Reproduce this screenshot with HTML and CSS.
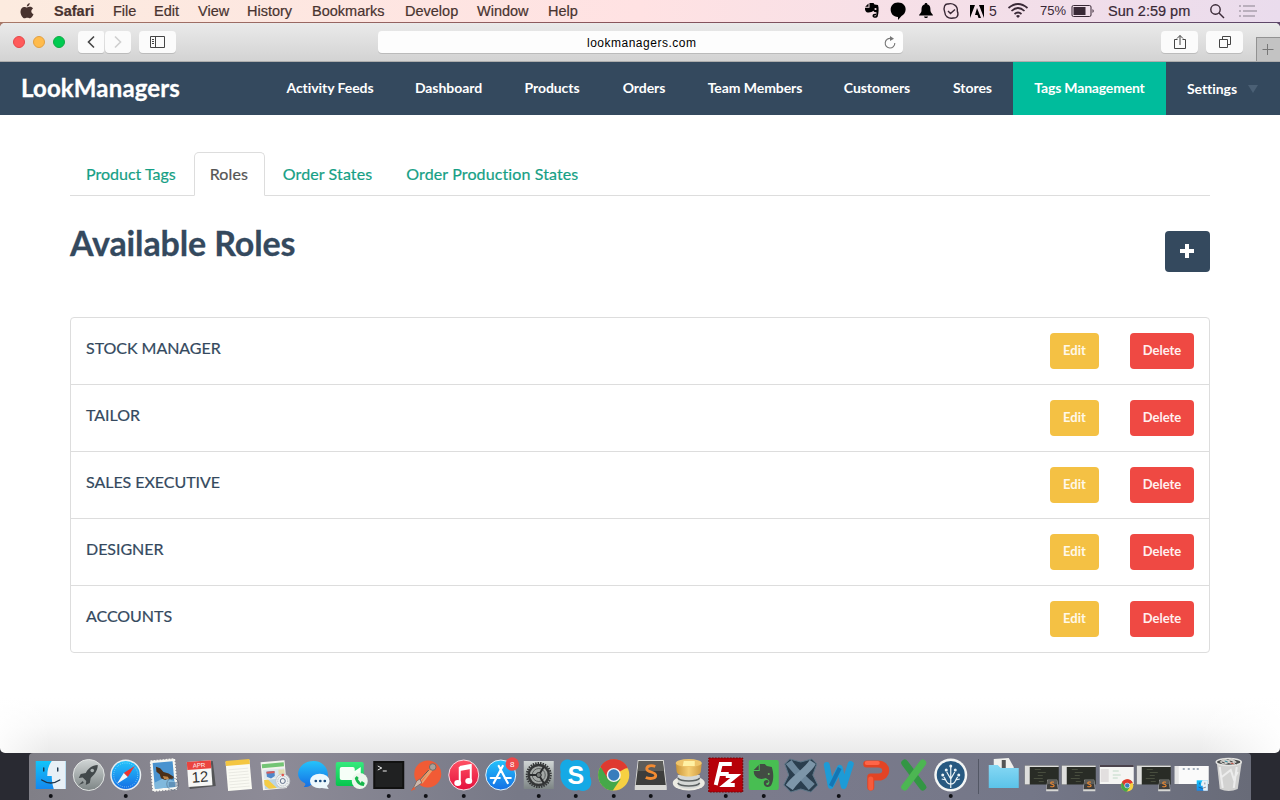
FILE: index.html
```html
<!DOCTYPE html>
<html lang="en">
<head>
<meta charset="utf-8">
<title>LookManagers</title>
<link rel="stylesheet" href="styles.css">
</head>
<body>
<div class="desktop">
  <header class="menubar">
    <svg class="apple" width="14" height="18" viewBox="0 0 14 18"><path d="M9.700 1C9.800 3 8.300 4.600 6.800 4.600 6.700 2.800 8.200 1.200 9.700 1zM7 5.500C7.700 5.500 8.600 4.800 10 4.800c1.300 0 2.400.7 3 1.600-2.500 1.500-2.100 4.700.5 5.700-.6 1.800-2 4.200-3.400 4.200-1.100 0-1.400-.6-2.800-.6s-1.800.6-2.800.6C2.800 16.300.500 12.700.500 9.700.500 6.600 2.400 4.900 4.200 4.900c1.200 0 2.200.6 2.800.6z"/></svg>
    <nav class="menus"><b>Safari</b><span>File</span><span>Edit</span><span>View</span><span>History</span><span>Bookmarks</span><span>Develop</span><span>Window</span><span>Help</span></nav>
    <div class="status">
      <svg width="16" height="18" viewBox="0 0 16 18"><path d="M4.500 1.500v3.300H1.200zM5.500 1h4l1 1.500 3.500.500c1 3 .8 7.500-.3 11.500-.6 1.700-5.200 1.800-5.200-.5 0-1.800 1.500-2.700 3.500-2.200v1.600c-1-.3-1.800 0-1.800.4 0 .8 1.700.8 2-.2l.3-3.300-2-.3-1.300-1.200c-1 1.700-4.500 2-6.500 1.500C1.500 9.500.800 8 1 5.800h4.500z"/><ellipse cx="11.500" cy="7" rx="1.100" ry=".9" fill="#f7dce4"/></svg>
      <svg width="18" height="20" viewBox="0 0 18 20"><path d="M9 1.500c9.500 0 9.500 11 3.500 13.500L9 19v-3C-1 15.500-.5 1.500 9 1.500z"/></svg>
      <svg width="16" height="18" viewBox="0 0 16 18"><path d="M8 1c1 0 1.500.6 1.400 1.500C12 3 12.500 5 12.500 9c0 2 2.500 3 2.500 4.500H1C1 12 3.500 11 3.500 9c0-4 .5-6 3.100-6.500C6.500 1.600 7 1 8 1zM6 14.500h4c-.5 2-3.500 2-4 0z"/></svg>
      <svg class="line" width="18" height="18" viewBox="0 0 18 18"><path d="M2.700 10C1 5 3 1.500 6 2c5-1.500 10 2 9.300 7 2 5-1 7.500-4.300 7-5 1-8-2-8.300-6zM6 9l2.500 2.500L13 7.500"/></svg>
      <svg width="16" height="16" viewBox="0 0 16 16"><path d="M1 2h5L1 15zM10 2h5v13zM8 5l4 10H9.500l-1-3H6z"/></svg>
      <span class="five">5</span>
      <svg class="wifi" width="22" height="18" viewBox="0 0 22 18"><path d="M1.500 6Q11-2 20.500 6M4.500 9Q11 3 17.500 9M7.500 12Q11 9 14.500 12"/><path class="solid" d="M9 14q2-2 4 0l-2 2z"/></svg>
      <span class="percent">75%</span>
      <svg class="battery" width="24" height="14" viewBox="0 0 24 14"><rect x="1" y="1.500" width="19" height="11" rx="1.500"/><path class="solid" d="M2.500 3h12v8h-12zM21.500 5q2.500 2 0 4z"/></svg>
      <span class="clock">Sun 2:59 pm</span>
      <svg class="line search" width="16" height="16" viewBox="0 0 16 16"><circle cx="6.500" cy="6.500" r="4.700"/><path d="M10 10l5 5"/></svg>
      <svg class="menu-list" width="20" height="14" viewBox="0 0 20 14"><path d="M1 2h2M5 2h12M1 7h2M5 7h14M1 12h2M5 12h12"/></svg>
    </div>
  </header>
  <main class="window">
    <div class="toolbar">
      <i class="light red"></i><i class="light amber"></i><i class="light green"></i>
      <button class="tool back"><svg width="10" height="14" viewBox="0 0 10 14"><path d="M8 1.500L2.500 7 8 12.500"/></svg></button>
      <button class="tool forward"><svg width="10" height="14" viewBox="0 0 10 14"><path d="M2 1.500L7.500 7 2 12.500"/></svg></button>
      <button class="tool sidebar"><svg width="17" height="14" viewBox="0 0 17 14"><path class="thin" d="M1.500 1.500h14v11h-14zM6.500 1.500v11M3 4.500h2M3 6.500h2M3 8.500h2"/></svg></button>
      <div class="address"><span>lookmanagers.com</span><svg width="14" height="14" viewBox="0 0 14 14"><path d="M8 2.500A4.800 4.800 0 1 0 11.800 7"/><path class="arrow" d="M7 0l4 2.700L7 5z"/></svg></div>
      <button class="tool share"><svg width="14" height="16" viewBox="0 0 14 16"><path class="thin" d="M4.500 5.500h-3v9h11v-9h-3M7 11V1.500M4 4.500l3-3 3 3"/></svg></button>
      <button class="tool tabs-icon"><svg width="14" height="14" viewBox="0 0 14 14"><path class="thin" d="M1.500 4.500h8v8h-8zM4.500 4.500v-3h8v8H9.500"/></svg></button>
      <button class="new-tab" aria-label="New tab"><svg width="14" height="14" viewBox="0 0 14 14"><path class="thin" d="M1.500 6.500h11M6.500 1v11"/></svg></button>
    </div>
    <div class="navbar">
      <a class="brand">LookManagers</a>
      <nav class="links"><a>Activity Feeds</a><a>Dashboard</a><a>Products</a><a>Orders</a><a>Team Members</a><a>Customers</a><a>Stores</a><a class="active">Tags Management</a><a class="settings">Settings<i class="caret"></i></a></nav>
    </div>
    <section class="content">
      <nav class="tabs"><a>Product Tags</a><a class="current">Roles</a><a>Order States</a><a class="long">Order Production States</a></nav>
      <div class="heading"><h1>Available Roles</h1><button class="add" aria-label="Add role"><svg width="14" height="14" viewBox="0 0 14 14"><path d="M5 0h4v5h5v4H9v5H5V9H0V5h5z"/></svg></button></div>
      <ul class="roles">
        <li><span>STOCK MANAGER</span><button class="btn edit">Edit</button><button class="btn delete">Delete</button></li>
        <li><span>TAILOR</span><button class="btn edit">Edit</button><button class="btn delete">Delete</button></li>
        <li><span>SALES EXECUTIVE</span><button class="btn edit">Edit</button><button class="btn delete">Delete</button></li>
        <li><span>DESIGNER</span><button class="btn edit">Edit</button><button class="btn delete">Delete</button></li>
        <li><span>ACCOUNTS</span><button class="btn edit">Edit</button><button class="btn delete">Delete</button></li>
      </ul>
    </section>
  </main>
  <footer class="dock-area">
    <svg class="defs" width="0" height="0"><defs>
      <linearGradient id="blue" x2="0" y2="1"><stop stop-color="#24c3fb"/><stop offset="1" stop-color="#156fe5"/></linearGradient>
      <linearGradient id="face" x2="0" y2="1"><stop stop-color="#12c4fa"/><stop offset="1" stop-color="#1488ee"/></linearGradient>
      <linearGradient id="silver" x2="0" y2="1"><stop stop-color="#d0d5d5"/><stop offset="1" stop-color="#7d8585"/></linearGradient>
      <linearGradient id="pink" x2="0" y2="1"><stop stop-color="#ff5264"/><stop offset="1" stop-color="#e4103c"/></linearGradient>
      <linearGradient id="greenfill" x2="0" y2="1"><stop stop-color="#35e97d"/><stop offset="1" stop-color="#07c54d"/></linearGradient>
      <linearGradient id="folder" x2="0" y2="1"><stop stop-color="#86d8f4"/><stop offset="1" stop-color="#5bc3e9"/></linearGradient>
      <linearGradient id="gold" x2="1" y2="0"><stop stop-color="#c99437"/><stop offset=".5" stop-color="#f6cf74"/><stop offset="1" stop-color="#cf9a40"/></linearGradient>
      <g id="chrome"><circle r="16" fill="#f6d042"/><path d="M0 0L-14-8A16 16 0 0 1 14-8z" fill="#df3a30"/><path d="M0 0L-14-8A16 16 0 0 0-1 16L7 4z" fill="#45a849"/><path d="M0-7H14.500A16 16 0 0 0-13.500-8.500L-6 4z" fill="#df3a30"/><circle r="7.300" fill="#f6f6f2"/><circle r="5.800" fill="#397dbd"/></g>
      <g id="sublime"><path d="M-13-15H13L16 12v3h-32v-3z" fill="#d8d8d5"/><path d="M-12-14H12L15 10h-30z" fill="#3d3d3c"/><path d="M-12-14H12L13-4h-26z" fill="#5c5c59"/><path d="M4.500-8.500C1-10-4-9.500-4-6-4-2.500 5-3.500 5 .5 5 4-2 4-5 2.500" fill="none" stroke="#f28b32" stroke-width="2.800"/></g>
      <g id="finder"><path d="M-15-14h30v28h-30z" fill="url(#face)"/><path d="M1-14h14v28H3C1.500 9 1 5 1 1h-4.500c0-6 1.500-11 4.500-15z" fill="#e8f0f6"/><path d="M-7-7v3M7-7v3M-9 5Q0 11 9 5" fill="none" stroke="#1d3349" stroke-width="1.400" stroke-linecap="round"/></g>
      <g id="thumb"><path d="M-17-8h34v19h-34z" fill="#292c26"/><path d="M-17-8h34v1.500h-34zM-17-7h5v18h-5z" fill="#dededd"/><path d="M-7-4h6M-4-1h8M-4 2h5M-8 5h9M-3 8h5" stroke="#565c49" stroke-width=".7"/><use href="#sublime" transform="translate(10.500 12) scale(.38)"/></g>
    </defs></svg>
    <div class="dock">
      <svg class="app" viewBox="-18.75 -22 37.5 47"><use href="#finder"/><circle class="dot" cy="21" r="2"/></svg>
      <svg class="app" viewBox="-18.75 -22 37.5 47"><circle r="15.500" fill="url(#silver)" stroke="#e1e4e3"/><path d="M9-10C3-10-1-6-3-2l-5 1-2 4 4-.5 3.500 3.500-.5 4 4-2 1-5C5 0 9-4 9-10zM-6 6l-4 4 5-2z" fill="#42494b"/><circle cx="3.500" cy="-4.500" r="1.800" fill="#aab1b1"/></svg>
      <svg class="app" viewBox="-18.75 -22 37.5 47"><circle r="15.500" fill="#e9eef0"/><circle r="14" fill="url(#blue)"/><circle r="12" fill="none" stroke="#a4ddfa" stroke-dasharray=".7 1.500"/><path d="M9-9L2 2-2-2z" fill="#ee3430"/><path d="M-9 9L-2-2 2 2z" fill="#f6f6f6"/><circle class="dot" cy="21" r="2"/></svg>
      <svg class="app" viewBox="-18.75 -22 37.5 47"><g transform="rotate(-5)"><path d="M-12-15h24v30h-24z" fill="#f7f7f2" stroke="#f7f7f2" stroke-width="1.500" stroke-dasharray="2 1"/><path d="M-10-13h20v26h-20z" fill="#4a93cf"/><path d="M-10 7L0 3 10 7v6h-20z" fill="#80b9dd"/><path d="M-7-9l4 2 3 4 5 2 5 4-2 2-4-1-3 1-4-2-1-4-3-3z" fill="#4b3019"/><path d="M-1 1l5 1 1 3-5-1z" fill="#bd8547"/></g><circle cx="9" cy="9" r="6" fill="none" stroke="#485d72" stroke-opacity=".5"/><path d="M5 7h8v5H5z" fill="#3e6c96" fill-opacity=".5"/></svg>
      <svg class="app" viewBox="-18.75 -22 37.5 47"><path d="M-12-12l24-2 3 25-26 3z" fill="#545557"/><g transform="rotate(-4)"><path d="M-13-14h24v25h-24z" fill="#f7f7f5"/><path d="M-13-14h24v8h-24z" fill="#eb443f"/><text x="-1" y="-7.800" class="cal-month">APR</text><text x="-1" y="7" class="cal-day">12</text></g></svg>
      <svg class="app" viewBox="-18.75 -22 37.5 47"><g transform="rotate(-5)"><path d="M-12-14h24v29h-24z" fill="#fafaf3"/><path d="M-12-15h24v5h-24z" fill="#f4c640"/><path d="M-10-6h20M-10-3h20M-10 0h20M-10 3h20M-10 6h20M-10 9h20M-10 12h20" stroke="#deded8" stroke-width=".6"/></g></svg>
      <svg class="app" viewBox="-18.75 -22 37.5 47"><g transform="rotate(-5)"><path d="M-14-14h24v28h-24z" fill="#f3f3ee"/><path d="M-13-12h22v4h-22z" fill="#74c575"/><path d="M-12-6H9v9h-21z" fill="#dde7ec"/><path d="M-9-4h8v5l-4 2-4-2z" fill="#4f87c9"/><path d="M-9-4h8v2h-8z" fill="#d95b58"/><path d="M-12 4h20v9h-20z" fill="#bad5e4"/><path d="M-12 4h4L0 13h-8l-4-4z" fill="#f4cc45"/><path d="M3-5h6v8H3z" fill="#e2dcae"/></g><circle cx="7" cy="6" r="7" fill="#eef1f2" stroke="#c4c8cb"/><circle cx="7" cy="6" r="5" fill="none" stroke="#a8b0b5" stroke-dasharray="1 1"/><circle cx="7" cy="6" r="2.500" fill="none" stroke="#62708a"/><circle cx="7" cy="0" r="1.300" fill="#e25449"/></svg>
      <svg class="app" viewBox="-18.75 -22 37.5 47"><path d="M-10 12c2-2 2-3 1-4C-21 3-16-14 0-14S20 9 4 9l-7 1c-2 2-4 2-7 2z" fill="url(#blue)"/><ellipse cx="6" cy="6" rx="9.800" ry="7.300" fill="#edf8fd"/><path d="M12 9l3 5-7-1z" fill="#edf8fd"/><path d="M2 6h.1M6.500 6h.1M11 6h.1" stroke="#1b4b7e" stroke-width="2.600" stroke-linecap="round"/></svg>
      <svg class="app" viewBox="-18.75 -22 37.5 47"><rect x="-15" y="-13" width="28" height="24" rx="2" fill="url(#greenfill)"/><path d="M-11-6q0-2 2-2H2q2 0 2 2v2l6-4V5L4 3v2H-9q-2 0-2-2z" fill="#f6fff7"/><circle cx="9" cy="6" r="8" fill="#edf7ed"/><path d="M6 1L4 3c1 5 5 8 9 8l1-3-3-2-1 2-3-4 1-1z" fill="#17b74c"/></svg>
      <svg class="app" viewBox="-18.75 -22 37.5 47"><path d="M-14.500-13h29v26h-29z" fill="#202122" stroke="#111" stroke-width="2"/><path d="M-11-9l4 2-4 2M-6-4h4" fill="none" stroke="#eee"/><circle class="dot" cy="21" r="2"/></svg>
      <svg class="app" viewBox="-18.75 -22 37.5 47"><circle cx="2" cy="-1" r="13.500" fill="#f15b35"/><path d="M-7 7L4-5M-4 8L6-5" fill="none" stroke="#e7a16f" stroke-width="2"/><path d="M-6 5L3-5" stroke="#5c5350" stroke-width="1"/><circle cx="7" cy="-8" r="3.300" fill="#aaa29b" stroke="#6f6e6a"/><path d="M-13 14l4-8 3-2 2 4z" fill="#ccb8ad" stroke="#775e56" stroke-width=".7"/><path d="M-15 16l3-4 2 2z" fill="#e75b37"/><circle class="dot" cy="21" r="2"/></svg>
      <svg class="app" viewBox="-18.75 -22 37.5 47"><circle r="15" fill="url(#pink)" stroke="#f7dce2"/><path d="M-4-8L7-10V6" fill="none" stroke="#fff" stroke-width="2"/><path d="M-4-8L7-10v4L-4-4z" fill="#fff"/><path d="M-4-8V8" stroke="#fff" stroke-width="2"/><ellipse cx="-6" cy="8" rx="3.500" ry="3" fill="#fff"/><ellipse cx="5" cy="6" rx="3.500" ry="3" fill="#fff"/><circle class="dot" cy="21" r="2"/></svg>
      <svg class="app" viewBox="-18.75 -22 37.5 47"><circle r="15" fill="url(#blue)" stroke="#e1f1fa"/><path d="M-7 8L2-9M7 8L-2-9M-10 3h9M4 3h6" fill="none" stroke="#fff" stroke-width="2.200" stroke-linecap="round"/><circle cx="11.500" cy="-11" r="6.700" fill="#ed494b"/><text x="11.500" y="-8" class="badge-count">8</text></svg>
      <svg class="app" viewBox="-18.75 -22 37.5 47"><path d="M-15-14h30v28h-30z" fill="url(#silver)"/><circle r="12" fill="none" stroke="#343637" stroke-width="2" stroke-dasharray="1.500 1"/><circle r="10" fill="#a4a8a6" stroke="#343637" stroke-width="2.400"/><circle r="6.500" fill="none" stroke="#595d5d"/><path d="M0 0L5-8M0 0h-9M0 0l5 8" stroke="#2b2d2e" stroke-width="2"/><circle r="2.500" fill="#777b7a" stroke="#252728"/><circle class="dot" cy="21" r="2"/></svg>
      <svg class="app" viewBox="-18.75 -22 37.5 47"><path d="M-15-3c-3-10 5-15 11-11C7-18 16-9 14 1c5 10-3 18-11 14C-8 18-17 8-15-3z" fill="#15a9e5"/><text y="9" class="skype-letter">S</text><circle class="dot" cy="21" r="2"/></svg>
      <svg class="app" viewBox="-18.75 -22 37.5 47"><use href="#chrome" transform="scale(.97)"/><circle class="dot" cy="21" r="2"/></svg>
      <svg class="app" viewBox="-18.75 -22 37.5 47"><use href="#sublime"/><circle class="dot" cy="21" r="2"/></svg>
      <svg class="app" viewBox="-18.75 -22 37.5 47"><ellipse cy="8" rx="16" ry="7.500" fill="#ecebe3"/><path d="M-11 0h22v10c-2 5-20 5-22 0z" fill="#d5d8d6"/><path d="M-11 3c3 4 19 4 22 0M-11 8c3 4 19 4 22 0" fill="none" stroke="#5b6161" stroke-width="1.500"/><path d="M-13-12l1 9c2 6 22 6 24 0l1-9z" fill="url(#gold)"/><ellipse cy="-12" rx="13" ry="4" fill="#efc56b"/><path d="M-5-14H6v5H-6z" fill="#fff1a4"/><circle class="dot" cy="21" r="2"/></svg>
      <svg class="app" viewBox="-18.75 -22 37.5 47"><path d="M-17-17h34v34h-34z" fill="#b70009" stroke="#780508" stroke-dasharray="2 1"/><path d="M-10 10L-5-11H6M-7-1H3M0 1h10L-1 10H9" fill="none" stroke="#fff" stroke-width="4"/><circle class="dot" cy="21" r="2"/></svg>
      <svg class="app" viewBox="-18.75 -22 37.5 47"><rect x="-15" y="-15" width="30" height="30" rx="2" fill="#48be52"/><path d="M-5-10v5h-5zM-4-11h5l2 2 5 1c2 6 2 12 0 17-1 4-8 4-8-1 0-3 3-4 5-2l-1 2c-2-1-2 2 0 2 2-1 2-4 1-5l-3-2C-2 5-10 4-10-4h6z" fill="#424c43"/><circle cx="5" cy="-1" r="1" fill="#69bb5f"/><circle class="dot" cy="21" r="2"/></svg>
      <svg class="app" viewBox="-18.75 -22 37.5 47"><path d="M-16-11l5-5 11 3 11-3 5 5-4 11 5 10-7 7L0 14l-10 3-7-7 5-10z" fill="#2a3e4e" stroke="#5d7688"/><path d="M-15-11l6-4C-4-6 8 3 14 9l-6 6C2 7-9-3-15-11z" fill="#6d879b"/><path d="M9-15l6 4C11-3 1 3-8 15l-7-5C-10 2 2-5 9-15z" fill="#7d96a9"/></svg>
      <svg class="app" viewBox="-18.75 -22 37.5 47"><path d="M-12-10L-8 11 1-7 5 11 12-11" fill="none" stroke="#1d9bd6" stroke-width="6" stroke-linejoin="round" stroke-linecap="round"/><path d="M-8 11L1-7" stroke="#1475b4" stroke-width="4"/><circle class="dot" cy="21" r="2"/></svg>
      <svg class="app" viewBox="-18.75 -22 37.5 47"><path d="M-9-11H2C13-11 12 2 3 2H-5V12" fill="none" stroke="#e34424" stroke-width="7" stroke-linejoin="round" stroke-linecap="round"/><path d="M-9-12H2" stroke="#ff6548" stroke-width="4" stroke-linecap="round"/><path d="M-5 4V13" stroke="#f75b3b" stroke-width="5" stroke-linecap="round"/></svg>
      <svg class="app" viewBox="-18.75 -22 37.5 47"><path d="M-9-12L9 12" stroke="#339644" stroke-width="7" stroke-linecap="round"/><path d="M9-12L-9 12" stroke="#4cb652" stroke-width="7" stroke-linecap="round"/></svg>
      <svg class="app" viewBox="-18.75 -22 37.5 47"><circle r="16.500" fill="#f4f6f5"/><circle r="14" fill="#275981"/><path d="M0 13V-8M0 9C-5 9-4 5-7 2M0 9C5 9 4 5 7 2M0 4L-4-3M0 4l4-7M-5 5L-9 4M5 5l4-1" fill="none" stroke="#edf5f7" stroke-width="1.200"/><g fill="#edf5f7"><circle cy="-9" r="1.500"/><circle cx="-4.500" cy="-5" r="1.500"/><circle cx="4.500" cy="-5" r="1.500"/><circle cx="-8" cy="0" r="1.500"/><circle cx="8" cy="0" r="1.500"/></g><circle class="dot" cy="21" r="2"/></svg>
      <i class="separator"></i>
      <svg class="app" viewBox="-18.75 -22 37.5 47"><path d="M-10-16L5-17l5 9v5h-20z" fill="#f0f0ed"/><path d="M-2-15h4v9h-4z" fill="#555"/><path d="M-15-10h9l3 3h18v20h-30z" fill="url(#folder)"/></svg>
      <svg class="app" viewBox="-18.75 -22 37.5 47"><use href="#thumb" y="-1.500"/></svg>
      <svg class="app" viewBox="-18.75 -22 37.5 47"><use href="#thumb" y="-1.500"/></svg>
      <svg class="app" viewBox="-18.75 -22 37.5 47"><path d="M-17-10h34V9h-34z" fill="#f5f5f3"/><path d="M-17-10h34v2h-34z" fill="#4b434c"/><path d="M-16-6h8v13h-8z" fill="#e2dfdf"/><path d="M-4-4h6M-4 0h8M-4 3h5" stroke="#c0d9c7"/><use href="#chrome" transform="translate(10.500 10.500) scale(.38)"/></svg>
      <svg class="app" viewBox="-18.75 -22 37.5 47"><use href="#thumb" y="-1.500"/></svg>
      <svg class="app" viewBox="-18.75 -22 37.5 47"><path d="M-17-9h34V9h-34z" fill="#fafafa"/><path d="M-17-9h4V9h-4z" fill="#e5e5e5"/><path d="M-9-6h2M-4-6h2M1-6h2M5-6h2" stroke="#8292a5" stroke-width="1.500"/><use href="#finder" transform="translate(10.500 10.500) scale(.37)"/></svg>
      <svg class="app" viewBox="-18.75 -22 37.5 47"><path d="M-12-13L-9 14q9 4 18 0l4-27z" fill="#d2d2d1"/><path d="M-9-8L-6 13M8-8L5 13M-7 2L2-5 5 4 9-3" fill="none" stroke="#ececec" stroke-width="2"/><ellipse cy="-13" rx="12.500" ry="3.500" fill="#484a4a" stroke="#e6e6e4" stroke-width="1.500"/><path d="M-9-13l4-4 4 2 4-2 5 4-3 3-5-2-5 2z" fill="#cfcdc9"/><path d="M-7-13l3 1M1-14l3 1M6-12l2 1" stroke="#444"/><path d="M-4-14l3 1" stroke="#338da0"/><path d="M2-12l3 1" stroke="#b64b3e"/></svg>
    </div>
  </footer>
</div>
</body>
</html>
```
FILE: styles.css
```css
* { box-sizing: border-box; }
body { margin: 0; font-family: Lato, sans-serif; }
button { border: 0; padding: 0; font-family: inherit; }
svg { flex: none; }
.desktop { width: 1280px; height: 800px; overflow: hidden; display: flex; flex-direction: column; background: linear-gradient(90deg, #a77868, #87545b 50%, #5d4769); }
.menubar { height: 22px; flex: none; display: flex; align-items: center; background: linear-gradient(90deg, #fcebdf, #ffe2e3 50%, #eadced); color: #48332f; font: 14.5px/22px "Liberation Sans", sans-serif; padding-left: 20px; }
.apple { fill: #48332f; margin-right: 20px; }
.menus { display: grid; grid-template-columns: 59px 41px 44px 49px 65px 93px 72px 71px 60px; width: 554px; white-space: nowrap; -webkit-text-stroke: .2px; }
.status { display: flex; align-items: center; margin-left: 256px; color: #392936; height: 22px; }
.status svg:nth-of-type(2) { margin-left: 9px; }
.status svg:nth-of-type(3) { margin-left: 11px; }
.status svg:nth-of-type(4) { margin-left: 8px; }
.status svg:nth-of-type(5) { margin-left: 9px; }
.line { fill: none; stroke: #392936; stroke-width: 1.4; }
.five { font-size: 14px; width: 22px; padding-left: 4px; }
.wifi, .battery { fill: none; stroke: #392936; stroke-width: 1.7; }
.battery { stroke-width: 1; margin-left: 3px; }
.solid { fill: #392936; stroke: none; }
.percent { font-size: 13px; width: 28px; margin-left: 11px; }
.clock { width: 84px; margin-left: 13px; white-space: nowrap; -webkit-text-stroke: .2px; }
.search { margin-left: 17px; }
.menu-list { margin-left: 13px; stroke: #aba0ad; stroke-width: 1.4; }
.window { height: 730px; margin-top: 1px; flex: none; border-radius: 5px; overflow: hidden; background: linear-gradient(90deg, rgba(255, 255, 255, .8), transparent 50px 1200px, rgba(255, 255, 255, .9)), linear-gradient(#fff 675px, #f9f9f9 702px, #eaeaea); position: relative; z-index: 1; }
.toolbar { height: 39px; display: flex; align-items: center; background: linear-gradient(#eaeaea, #d3d3d3); border-bottom: 1px solid #adadad; padding-left: 13px; }
.light { width: 12px; height: 12px; border: 1px solid; border-radius: 50%; margin-right: 8px; }
.red { background: #ff5b5b; border-color: #e64749; }
.amber { background: #ffbb4c; border-color: #e2a041; }
.green { background: #00cb51; border-color: #10aa45; margin-right: 13px; }
.tool { height: 22px; border-radius: 4px; background: #fbfbfb; box-shadow: 0 1px 0 #bcbcbc; display: grid; place-items: center; flex: none; }
.tool svg, .new-tab svg { fill: none; stroke: #454545; stroke-width: 1.6; }
.tool svg .thin { stroke-width: 1; }
.back { width: 26px; border-radius: 4px 2px 2px 4px; }
.forward { width: 26px; margin-left: 1px; }
.forward svg { stroke: #cfcfcf; }
.sidebar { width: 37px; margin-left: 8px; }
.address { width: 525px; height: 22px; margin-left: 202px; border-radius: 4px; background: #fdfdfd; box-shadow: 0 1px 0 #bbb; display: flex; align-items: center; padding: 2px 6px 0 209px; justify-content: space-between; font: 12px "Liberation Sans", sans-serif; }
.address span { letter-spacing: .5px; }
.address svg { fill: none; stroke: #777; stroke-width: 1.1; }
.address .arrow { fill: #777; stroke: none; }
.share { width: 37px; margin-left: 258px; }
.tabs-icon { width: 37px; margin-left: 8px; }
.new-tab { width: 24px; height: 24px; margin-left: 13px; align-self: flex-end; background: #c3c3c3; border: 1px solid #929292; border-width: 1px 0 0 1px; padding: 5px 0 0 4px; display: flex; align-items: flex-start; }
.new-tab svg { stroke: #777; stroke-width: 1; display: block; }
.navbar { height: 53px; background: #34495e; display: flex; color: #fff; font-weight: 700; }
.brand { width: 265px; padding-left: 21px; font-size: 24px; line-height: 51px; letter-spacing: .15px; -webkit-text-stroke: .3px; }
.links { display: grid; grid-template-columns: 128px 109px 98px 86px 136px 108px 83px 153px 114px; font-size: 14px; line-height: 51px; letter-spacing: -.06px; text-align: center; white-space: nowrap; }
.links a:not(.active):not(.settings) { padding-left: 2px; }
.links .active { background: #00bc9c; letter-spacing: -.18px; }
.links { width: 1015px; }
.settings { display: flex; align-items: center; height: 52px; padding-left: 21px; }
.caret { border: 5px solid transparent; border-top: 8px solid #4b6075; border-bottom: 0; margin: 2px 0 0 11px; }
.content { padding: 37px 70px 0; }
.tabs { height: 44px; display: flex; gap: 2px; border-bottom: 1px solid #ddd; }
.tabs a { height: 44px; padding: 0 15px; border: 1px solid transparent; font-size: 16px; line-height: 41px; letter-spacing: .12px; color: #16a085; white-space: nowrap; -webkit-text-stroke: .2px; }
.tabs a:first-child { letter-spacing: 0; }
.tabs .current { width: 71px; color: #555; background: #fff; border-color: #ddd #ddd #fff; border-radius: 5px 5px 0 0; }
.heading { height: 121px; display: flex; justify-content: space-between; align-items: flex-start; }
h1 { margin: 27px 0 0; font-size: 34px; line-height: 40px; letter-spacing: -.13px; color: #34495e; -webkit-text-stroke: .3px; }
.add { width: 45px; height: 41px; margin-top: 35px; border-radius: 4px; background: #34495e; display: grid; place-items: center; padding: 0 2px 1px 0; }
.add svg { fill: #fff; }
.roles { list-style: none; padding: 0; margin: 0; height: 336px; border: 1px solid #ddd; border-radius: 4px; background: #fff; }
.roles li { height: 67px; border-top: 1px solid #ddd; padding: 15px 15px 0; display: flex; align-items: flex-start; color: #34495e; }
.roles li:first-child { height: 66px; border-top: 0; }
.roles li span { flex: 1; font-size: 16px; line-height: 29px; letter-spacing: -.04px; -webkit-text-stroke: .2px; }
.btn { height: 36px; border-radius: 4px; color: #fff; font-size: 13px; font-weight: 700; line-height: 34px; padding-bottom: 2px; }
.edit { width: 49px; margin-right: 31px; background: #f4c144; color: #fff8e9; }
.delete { width: 64px; background: #ef4943; color: #fff0ef; }
.dock-area { flex: 1; margin-top: -6px; padding: 6px 29px 0; background: radial-gradient(ellipse at 12px 18px, #68625d, transparent 15px), radial-gradient(ellipse at 20px 42px, #5b5a62, transparent 13px), radial-gradient(ellipse at 1262px 22px, #343744, transparent 14px), #292a32; }
.dock { height: 47px; display: flex; padding: 0 3.25px; border-radius: 4px 4px 0 0; background: linear-gradient(90deg, #807f87, #8d8b97 20%, #777987 40%, #7b7b8c 60%, #747788 82%, #686b78); }
.app { width: 37.5px; height: 47px; overflow: visible; }
.defs { position: absolute; }
.separator { width: 16.5px; height: 35px; margin-top: 6px; background: linear-gradient(#535765, #535765) 8px 0 / 1px 35px no-repeat; }
.dot { fill: #101116; }
.cal-month { font: 6px "Liberation Sans", sans-serif; fill: #fff; text-anchor: middle; }
.cal-day { font: 15px "Liberation Sans", sans-serif; fill: #323232; text-anchor: middle; }
.badge-count { font: 8px "Liberation Sans", sans-serif; fill: #fff; text-anchor: middle; }
.skype-letter { font: bold 25px "Liberation Sans", sans-serif; fill: #fff; text-anchor: middle; }
```
